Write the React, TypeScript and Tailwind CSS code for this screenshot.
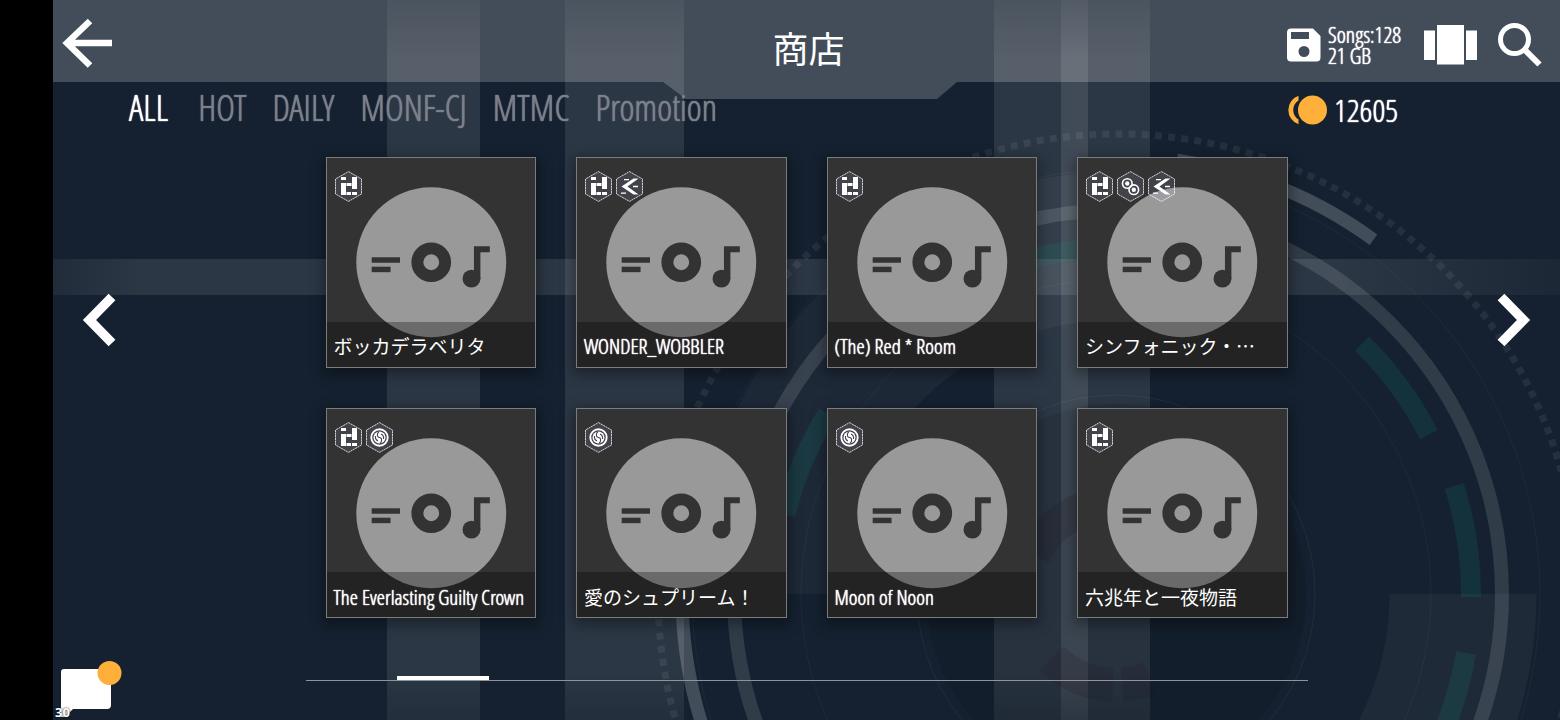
import type { ReactNode } from 'react';

type Mode = 'blocks' | 'arrow' | 'rings' | 'swirl';

interface Song {
  title: string;
  modes: Mode[];
  cjk?: boolean;
}

const LATIN = 'font-["Open_Sans_Condensed_Light","Noto_Sans","Noto_Sans_CJK_JP",sans-serif] [text-shadow:0_0_1px_currentColor,0_0_1px_currentColor]';
const CJK = 'font-["Noto_Sans_CJK_JP","Noto_Sans",sans-serif] [text-shadow:none]';

const songs: Song[] = [
  { title: 'ボッカデラベリタ', modes: ['blocks'], cjk: true },
  { title: 'WONDER_WOBBLER', modes: ['blocks', 'arrow'] },
  { title: '(The) Red * Room', modes: ['blocks'] },
  { title: 'シンフォニック・…', modes: ['blocks', 'rings', 'arrow'], cjk: true },
  { title: 'The Everlasting Guilty Crown', modes: ['blocks', 'swirl'] },
  { title: '愛のシュプリーム！', modes: ['swirl'], cjk: true },
  { title: 'Moon of Noon', modes: ['swirl'] },
  { title: '六兆年と一夜物語', modes: ['blocks'], cjk: true },
];

const tabs = ['ALL', 'HOT', 'DAILY', 'MONF-CJ', 'MTMC', 'Promotion'];

function arc(r: number, from: number, to: number): string {
  const point = (deg: number) => {
    const rad = (deg * Math.PI) / 180;
    return `${(1116 + r * Math.cos(rad)).toFixed(2)} ${(594 + r * Math.sin(rad)).toFixed(2)}`;
  };
  return `M${point(from)}A${r} ${r} 0 ${to - from > 180 ? 1 : 0} 1 ${point(to)}`;
}

function Backdrop() {
  return (
    <svg
      className="absolute inset-0 h-full w-full"
      viewBox="53 0 1507 720"
      preserveAspectRatio="xMidYMid slice"
      aria-hidden="true"
    >
      <defs>
        <linearGradient id="beamV" x1="0" y1="0" x2="0" y2="1">
          <stop offset="0" stopColor="#fff" stopOpacity="0.04" />
          <stop offset="0.08" stopColor="#fff" stopOpacity="0.1" />
          <stop offset="0.93" stopColor="#fff" stopOpacity="0.1" />
          <stop offset="1" stopColor="#fff" stopOpacity="0.06" />
        </linearGradient>
        <linearGradient id="beamH" x1="0" y1="0" x2="1" y2="0">
          <stop offset="0" stopColor="#fff" stopOpacity="0.05" />
          <stop offset="0.06" stopColor="#fff" stopOpacity="0.1" />
          <stop offset="0.85" stopColor="#fff" stopOpacity="0.1" />
          <stop offset="1" stopColor="#fff" stopOpacity="0.03" />
        </linearGradient>
      </defs>
      <rect x="387" y="0" width="93" height="720" fill="url(#beamV)" />
      <rect x="565" y="0" width="119" height="720" fill="url(#beamV)" />
      <rect x="994" y="0" width="156" height="720" fill="url(#beamV)" />
      <rect x="1061" y="0" width="27" height="720" fill="url(#beamV)" />
      <rect x="53" y="259" width="1507" height="36" fill="url(#beamH)" />
      <g fill="none">
        <path d={arc(348, 180, 270)} stroke="#fff" strokeOpacity="0.04" strokeWidth="148" />
        <path d={arc(347, 0, 90)} stroke="#fff" strokeOpacity="0.045" strokeWidth="147" />
        <circle cx="1116" cy="594" r="190" fill="#000" fillOpacity="0.08" />
        <circle cx="1118" cy="594" r="460" stroke="#fff" strokeOpacity="0.07" strokeWidth="7" strokeDasharray="7 6.2" />
        <circle cx="1116" cy="594" r="424" stroke="#fff" strokeOpacity="0.04" />
        <circle cx="1118" cy="594" r="384" stroke="#fff" strokeOpacity="0.12" strokeWidth="14" />
        <circle cx="1116" cy="594" r="315" stroke="#fff" strokeOpacity="0.04" />
        <circle cx="1116" cy="594" r="199" stroke="#fff" strokeOpacity="0.05" />
        <path d={arc(434, 130, 178)} stroke="#fff" strokeOpacity="0.2" strokeWidth="13" />
        <path d={arc(438, 278, 306)} stroke="#fff" strokeOpacity="0.2" strokeWidth="13" />
        <g stroke="#0f9d80" strokeOpacity="0.14" strokeWidth="20">
          <path d={arc(351, -45.5, -27)} />
          <path d={arc(355, -17.7, 0.5)} />
          <path d={arc(355, 9.6, 28)} />
          <path d={arc(340, 193.5, 212)} />
          <path d={arc(346, 255, 273)} />
        </g>
        <g stroke="#201420" strokeOpacity="0.17" strokeWidth="34">
          <path d={arc(91, 92, 135)} />
          <path d={arc(91, 68, 86)} />
          <path d={arc(91, 205, 255)} />
        </g>
      </g>
    </svg>
  );
}

const glyphs: Record<Mode, ReactNode> = {
  blocks: (
    <g fill="#fff">
      <rect x="6" y="6" width="5" height="3" />
      <rect x="6" y="12" width="5" height="12" />
      <rect x="11.500" y="12" width="5" height="3" />
      <rect x="17" y="6" width="5" height="12" />
      <rect x="11.500" y="21" width="4.500" height="3" />
      <rect x="17" y="21" width="5" height="3" />
    </g>
  ),
  arrow: (
    <g fill="#fff">
      <path d="M5.5 15.5 17.500 7.500h5L11.500 15.500l11 8h-5Z" />
      <path d="M8 8h5v1.200H8ZM17 14.700h5v1.500h-5ZM5 21.500h5v1.200H5Z" />
    </g>
  ),
  rings: (
    <g fill="none" stroke="#fff" strokeWidth="1.6">
      <circle cx="10.300" cy="12.500" r="4.800" />
      <circle cx="16.800" cy="18.700" r="4.800" />
      <circle cx="10.300" cy="12.500" r="2.200" fill="#fff" stroke="none" />
      <circle cx="16.800" cy="18.700" r="2.200" fill="#fff" stroke="none" />
    </g>
  ),
  swirl: (
    <g fill="none">
      <circle cx="13.500" cy="15.500" r="8.200" stroke="#fff" strokeWidth="1.900" />
      <circle cx="13.500" cy="15.500" r="6" fill="#fff" />
      <path
        d="M13 9.500c-2.500 2-2 6 .5 6s3 4 .5 6M9.500 14c-.5 2.500.5 4 2.500 5M17.500 17c.5-2.500-.5-4-2.500-5"
        stroke="#44444f"
        strokeWidth="1.100"
      />
    </g>
  ),
};

function Badge({ mode }: { mode: Mode }) {
  return (
    <svg viewBox="0 0 27 31" className="h-[31px] w-[27px]" aria-hidden="true">
      <path
        d="M13.500.6 26.500 8v15l-13 7.400L.5 23V8Z"
        fill="#b4b4ff"
        fillOpacity="0.12"
        stroke="#fff"
        strokeOpacity="0.85"
        strokeWidth="0.900"
        strokeDasharray="2.200 0.500"
      />
      {glyphs[mode]}
    </svg>
  );
}

function Disc() {
  return (
    <svg viewBox="0 0 210 210" className="block h-full w-full" aria-hidden="true">
      <circle cx="105" cy="105" r="75.500" fill="#999" />
      <g fill="#333">
        <rect x="45" y="100" width="28.500" height="5.500" />
        <rect x="45" y="109.500" width="19" height="5.500" />
        <path d="M148 89h16v6h-9.500v27h-6.500Z" />
        <circle cx="145.500" cy="121.500" r="9" />
      </g>
      <circle cx="105" cy="105" r="14" fill="none" stroke="#333" strokeWidth="12" />
    </svg>
  );
}

function SongCard({ song }: { song: Song }) {
  return (
    <li>
      <button
        type="button"
        className="relative block aspect-square w-full border border-[#7a7d7c] bg-[#333] text-left shadow-[0_4px_12px_3px_rgba(0,0,0,0.35)]"
      >
        <Disc />
        <span className="absolute top-[13px] left-2 flex gap-1">
          {song.modes.map((mode) => (
            <Badge key={mode} mode={mode} />
          ))}
        </span>
        <span className="absolute inset-x-0 bottom-0 flex h-[45px] items-center bg-black/30 px-[7px] pt-1">
          <span
            className={`leading-7 whitespace-nowrap text-white ${song.cjk ? `${CJK} text-[19px]` : `${LATIN} text-[21px]`}`}
          >
            {song.title}
          </span>
        </span>
      </button>
    </li>
  );
}

export default function App() {
  return (
    <div className={`flex min-h-screen bg-black pl-[53px] text-white ${LATIN}`}>
      <div className="relative flex min-w-0 flex-1 flex-col overflow-hidden bg-[#152130]">
        <Backdrop />

        <header className="relative grid h-[82px] grid-cols-[1fr_auto_1fr] items-center bg-white/20">
          <button type="button" aria-label="Back" className="ml-2 w-[52px] pt-1">
            <svg viewBox="0 0 52 52" className="block h-[52px] w-[52px]" fill="none" stroke="#fff" strokeWidth="6.500">
              <path d="M51 26H6M29 4 6 26l23 22.500" />
            </svg>
          </button>
          <h1 className={`pt-3 pl-1 text-[36px] leading-[52px] font-normal ${CJK}`}>商店</h1>
          <div className="flex items-center justify-end pt-2 pr-[17px]">
            <svg viewBox="0 0 34 34" className="h-[34px] w-[34px]" aria-hidden="true">
              <path
                fill="#fff"
                fillRule="evenodd"
                d="M4 .5h22L33.500 8v21.500a4 4 0 0 1-4 4H4a4 4 0 0 1-4-4v-25a4 4 0 0 1 4-4ZM4 4v7h18V4ZM17 18a5.500 5.500 0 1 0 0 11 5.500 5.500 0 0 0 0-11Z"
              />
            </svg>
            <p className="ml-[7px] flex w-[74px] flex-col text-[22px] leading-[21px] whitespace-nowrap">
              <span>Songs:128</span>
              <span>21 GB</span>
            </p>
            <button type="button" aria-label="Carousel view" className="ml-[22px]">
              <svg viewBox="0 0 53 40" className="block h-10 w-[53px]" fill="#fff">
                <path d="M0 5.500h11v29.500H0ZM13 0h27v39.500H13ZM42 5.500h11v29.500H42Z" />
              </svg>
            </button>
            <button type="button" aria-label="Search" className="ml-5">
              <svg viewBox="0 0 46 46" className="block h-[46px] w-[46px]" fill="none" stroke="#fff">
                <circle cx="17.500" cy="17.500" r="14" strokeWidth="5" />
                <path d="m27.500 27.500 15 15" strokeWidth="6" />
              </svg>
            </button>
          </div>
          <svg
            viewBox="0 0 300 17"
            className="absolute top-full left-1/2 h-[17px] w-[300px] -translate-x-1/2"
            aria-hidden="true"
          >
            <path d="M6 0h294l-20 17H29Z" fill="#fff" fillOpacity="0.2" />
          </svg>
        </header>

        <div className="relative flex h-[75px] items-start justify-between pt-1 pr-[162px] pl-[76px]">
          <nav className="flex gap-[26px] text-[36px] leading-[44px]">
            {tabs.map((tab, i) => (
              <a key={tab} href={`#${tab}`} className={i === 0 ? 'mr-1 text-white' : 'text-[#7c818b]'}>
                {tab}
              </a>
            ))}
          </nav>
          <p className="flex items-center gap-[7px] pt-1 text-[32px] leading-[40px]">
            <svg viewBox="0 0 40 30" className="h-[30px] w-10" aria-hidden="true">
              <circle cx="25.500" cy="15" r="14.500" fill="#ffb03b" />
              <path d="M11.500.8v4.800a11 11 0 0 0 0 18.800v4.800a15 15 0 0 1 0-28.400Z" fill="#ffb03b" />
            </svg>
            12605
          </p>
        </div>

        <main className="relative flex items-start justify-between pr-[29px] pl-[29px]">
          <button type="button" aria-label="Previous page" className="mt-[136px]">
            <svg viewBox="0 0 34 54" className="block h-[54px] w-[34px]" fill="none" stroke="#fff" strokeWidth="9.500">
              <path d="M30 4 7.500 27 30 50" />
            </svg>
          </button>
          <ul className="grid w-full max-w-[962px] grid-cols-4 gap-10">
            {songs.map((song) => (
              <SongCard key={song.title} song={song} />
            ))}
          </ul>
          <button type="button" aria-label="Next page" className="mt-[136px]">
            <svg viewBox="0 0 34 54" className="block h-[54px] w-[34px]" fill="none" stroke="#fff" strokeWidth="9.500">
              <path d="m4 4 22.500 23L4 50" />
            </svg>
          </button>
        </main>

        <div className="relative mt-[58px] flex justify-center">
          <div className="w-full max-w-[1002px] border-b border-[#8d94a0] pl-[91px]">
            <div className="h-1 w-[92px] bg-white" />
          </div>
        </div>

        <button type="button" aria-label="Messages" className="absolute bottom-0 left-2">
          <svg viewBox="0 0 62 60" className="block h-[60px] w-[62px]">
            <path d="M3 9h44a3 3 0 0 1 3 3v33a4 4 0 0 1-4 4H12l-8 8H0V12a3 3 0 0 1 3-3Z" fill="#fff" />
            <circle cx="48.500" cy="13" r="12" fill="#ffb03b" />
          </svg>
        </button>
        <span className="absolute bottom-0 left-[2px] font-['Noto_Sans',sans-serif] text-[13px] leading-4 font-bold text-white [text-shadow:0_0_2px_#000]">
          30
        </span>
      </div>
    </div>
  );
}
